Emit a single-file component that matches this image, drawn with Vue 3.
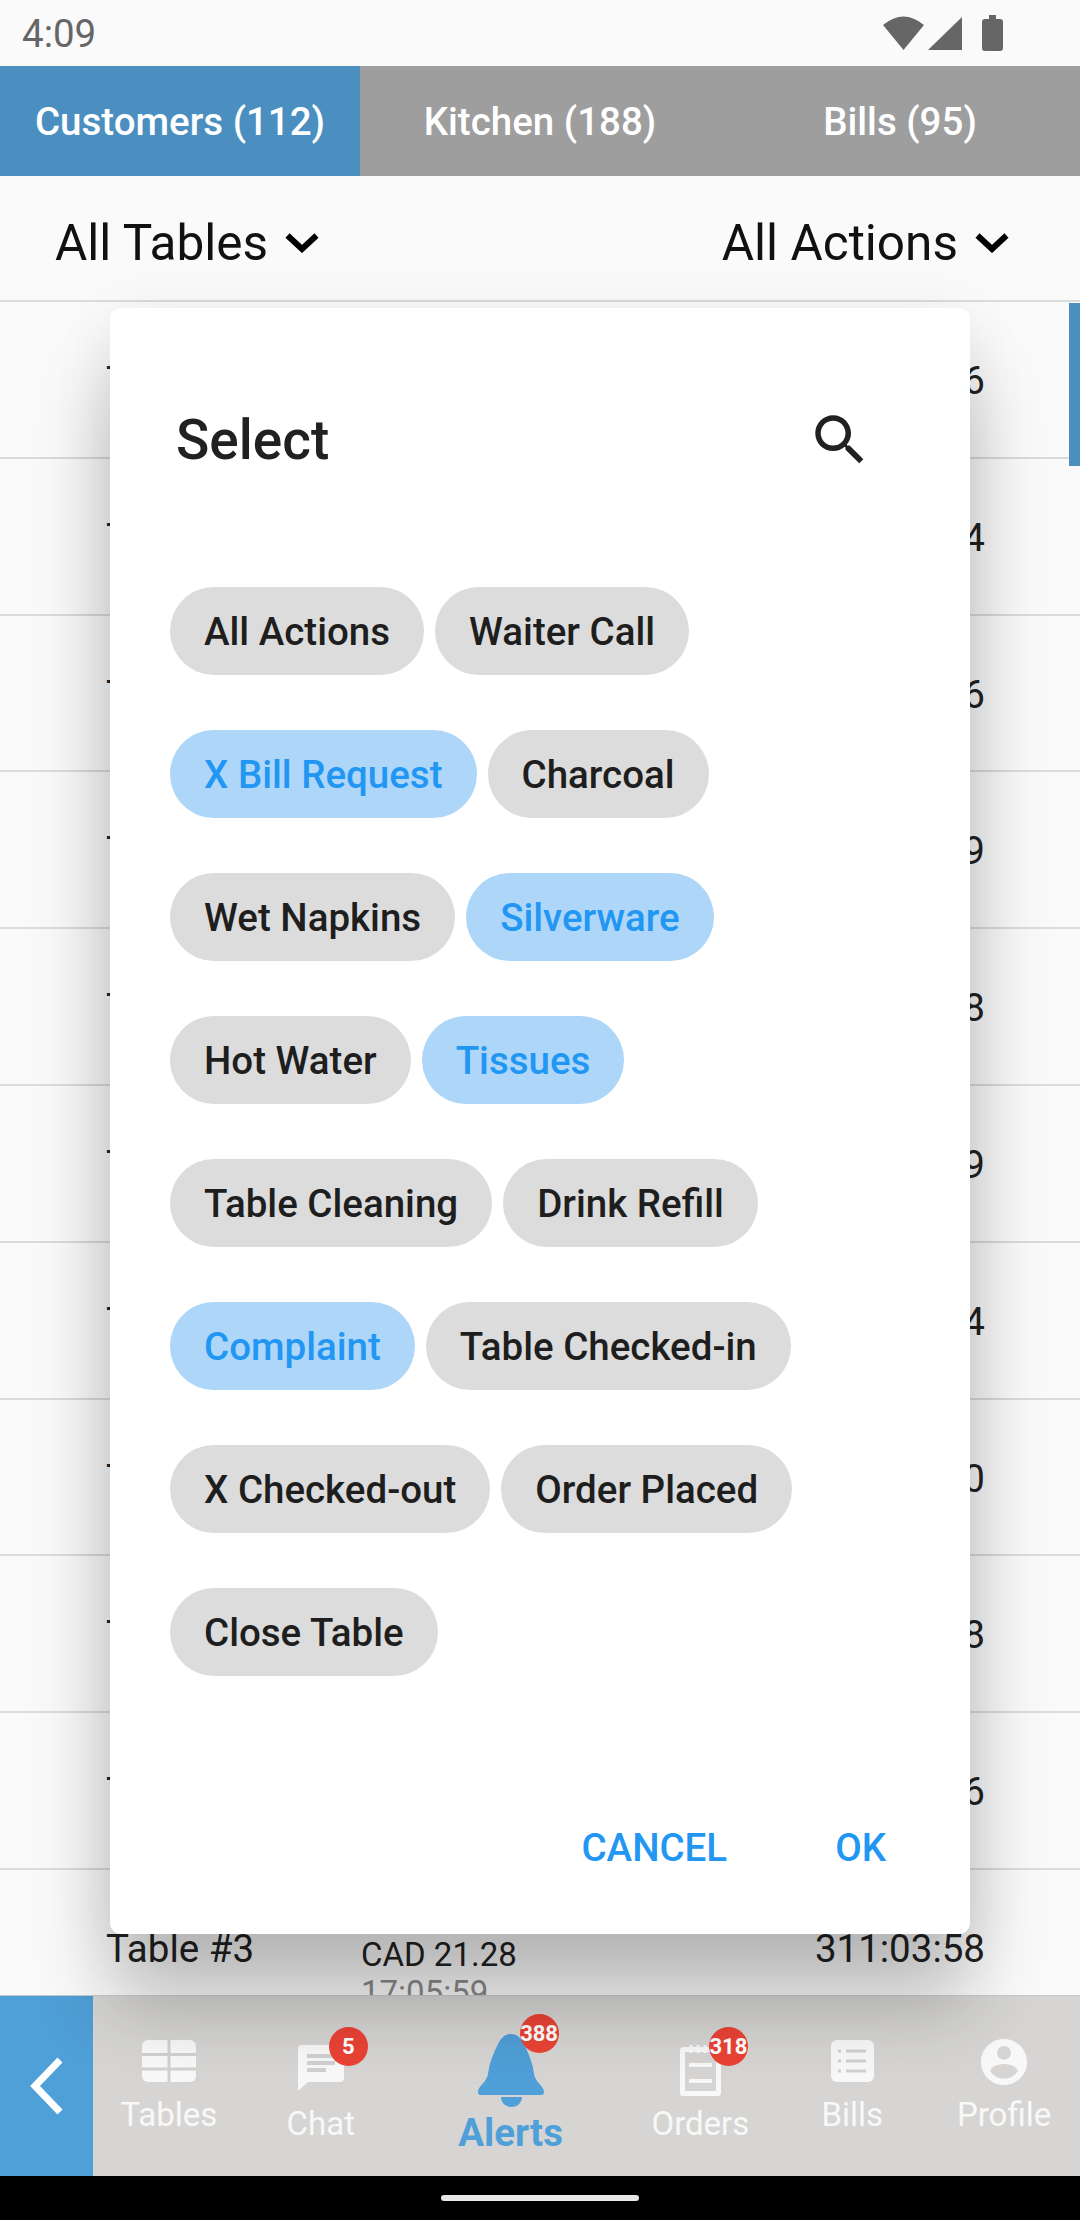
<template>
  <div class="page">
    <div class="status">
      <span class="clock">4:09</span>
      <div class="status-icons">
        <svg width="41" height="34" viewBox="0 0 41 34"><path d="M0 9 Q20.5 -8 41 9 L20.5 34 Z" fill="#666" /></svg>
        <svg width="34" height="33" viewBox="0 0 34 33"><path d="M34 0 V33 H0 Z" fill="#666" /></svg>
        <svg class="battery" width="21" height="36" viewBox="0 0 21 36"><path d="M7 0 H14 V4 H18 Q21 4 21 7 V33 Q21 36 18 36 H3 Q0 36 0 33 V7 Q0 4 3 4 H7 Z" fill="#666" /></svg>
      </div>
    </div>

    <div class="tabs">
      <div v-for="(t, i) in tabs" :key="t" class="tab" :class="{ active: i === 0 }">{{ t }}</div>
    </div>

    <div class="filters">
      <div v-for="f in filters" :key="f" class="filter">
        <span>{{ f }}</span>
        <svg width="34" height="20" viewBox="0 0 34 20"><path d="M2.5 2.5 L17 16 L31.500 2.500" fill="none" stroke="#000" stroke-width="6" /></svg>
      </div>
    </div>

    <div class="list">
      <div class="scrollbar"></div>
      <div v-for="r in rows" :key="r.time" class="row">
        <div class="row-table">{{ r.table }}</div>
        <div class="row-bill">
          <div class="amount">{{ r.amount }}</div>
          <div class="placed">{{ r.placed }}</div>
        </div>
        <div class="row-time">{{ r.time }}</div>
      </div>
    </div>

    <div class="bottom">
      <div class="back">
        <svg width="36" height="58" viewBox="0 0 36 58"><path d="M31 3 L6 29 L31 55" fill="none" stroke="#fff" stroke-width="7" /></svg>
      </div>

      <div class="nav-item nav-tables">
        <svg width="54" height="42" viewBox="0 0 54 42">
          <rect width="54" height="42" rx="6" fill="#f8f8f8" />
          <path d="M27 0 V42 M0 14.500 H54 M0 29 H54" stroke="#d2d1d0" stroke-width="3" />
        </svg>
        <span class="nav-label">Tables</span>
      </div>

      <div class="nav-item nav-chat">
        <div class="icon-wrap">
          <svg width="46" height="46" viewBox="0 0 46 46">
            <path d="M4 0 H42 Q46 0 46 4 V33 Q46 37 42 37 H10 L0 46 V4 Q0 0 4 0 Z" fill="#f8f8f8" />
            <path d="M9 11 H37 M9 18 H37 M9 25 H28" stroke="#d2d1d0" stroke-width="4" />
          </svg>
          <span class="badge badge-chat">5</span>
        </div>
        <span class="nav-label">Chat</span>
      </div>

      <div class="nav-item nav-alerts">
        <div class="icon-wrap">
          <svg width="66" height="73" viewBox="0 0 66 73">
            <path d="M33 0 C39 0 43 4 46 10 C51 20 55 30 56 40 C57 48 66 52 66 58 Q66 61 63 61 H3 Q0 61 0 58 C0 52 9 48 10 40 C11 30 15 20 20 10 C23 4 27 0 33 0 Z" fill="#4f9fd8" />
            <path d="M23 63 H44 C44 69 39 73 33.500 73 C28 73 23 69 23 63 Z" fill="#4f9fd8" />
          </svg>
          <span class="badge badge-alerts">388</span>
        </div>
        <span class="nav-label alerts-label">Alerts</span>
      </div>

      <div class="nav-item nav-orders">
        <div class="icon-wrap">
          <svg width="41" height="51" viewBox="0 0 41 51">
            <rect x="2.500" y="4.500" width="36" height="44" rx="1" fill="none" stroke="#f8f8f8" stroke-width="5" />
            <path d="M11 0 V8 M18 0 V8 M25 0 V8" stroke="#f8f8f8" stroke-width="3" />
            <path d="M9 20 H32 M9 36 H32" stroke="#f8f8f8" stroke-width="4" />
          </svg>
          <span class="badge badge-orders">318</span>
        </div>
        <span class="nav-label">Orders</span>
      </div>

      <div class="nav-item nav-bills">
        <svg width="43" height="42" viewBox="0 0 43 42">
          <rect width="43" height="42" rx="6" fill="#f8f8f8" />
          <path d="M15 11 H35 M15 21 H35 M15 31 H35" stroke="#d2d1d0" stroke-width="3" />
          <path d="M7 11 H10 M7 21 H10 M7 31 H10" stroke="#d2d1d0" stroke-width="3" />
        </svg>
        <span class="nav-label">Bills</span>
      </div>

      <div class="nav-item nav-profile">
        <svg width="46" height="46" viewBox="2 2 20 20">
          <path d="M12 2C6.480 2 2 6.480 2 12s4.480 10 10 10 10-4.480 10-10S17.520 2 12 2zm0 3c1.660 0 3 1.340 3 3s-1.340 3-3 3-3-1.340-3-3 1.340-3 3-3zm0 14.200c-2.500 0-4.710-1.280-6-3.220.030-1.990 4-3.080 6-3.080 1.990 0 5.970 1.090 6 3.080-1.290 1.940-3.500 3.220-6 3.220z" fill="#f8f8f8" />
        </svg>
        <span class="nav-label">Profile</span>
      </div>
    </div>

    <div class="system-nav"><div class="pill"></div></div>

    <div class="dialog">
      <div class="dialog-head">
        <span class="dialog-title">Select</span>
        <svg width="66" height="66" viewBox="0 0 24 24">
          <path d="M15.500 14h-.79l-.28-.27C15.410 12.590 16 11.110 16 9.500 16 5.910 13.090 3 9.500 3S3 5.910 3 9.500 5.910 16 9.500 16c1.610 0 3.090-.59 4.230-1.570l.27.28v.79l5 4.990L20.490 19l-4.990-5zm-6 0C7.010 14 5 11.990 5 9.500S7.010 5 9.500 5 14 7.010 14 9.500 11.990 14 9.500 14z" fill="#212121" />
        </svg>
      </div>
      <div class="chips">
        <div v-for="c in chips" :key="c.label" class="chip" :class="{ selected: c.selected }">{{ c.label }}</div>
      </div>
      <div class="actions">
        <span>CANCEL</span>
        <span>OK</span>
      </div>
    </div>
  </div>
</template>

<script setup>
const tabs = ['Customers (112)', 'Kitchen (188)', 'Bills (95)']
const filters = ['All Tables', 'All Actions']

const endings = ['311:04:06', '311:04:04', '311:03:56', '311:03:59', '311:03:48', '311:03:39', '311:03:34', '311:03:30', '311:03:28', '311:03:26']
const rows = [
  ...endings.map((time, i) => ({
    table: 'Table #' + (i + 4),
    amount: 'CAD 18.40',
    placed: '17:05:59',
    time
  })),
  { table: 'Table #3', amount: 'CAD 21.28', placed: '17:05:59', time: '311:03:58' }
]

const chips = [
  { label: 'All Actions' },
  { label: 'Waiter Call' },
  { label: 'X Bill Request', selected: true },
  { label: 'Charcoal' },
  { label: 'Wet Napkins' },
  { label: 'Silverware', selected: true },
  { label: 'Hot Water' },
  { label: 'Tissues', selected: true },
  { label: 'Table Cleaning' },
  { label: 'Drink Refill' },
  { label: 'Complaint', selected: true },
  { label: 'Table Checked-in' },
  { label: 'X Checked-out' },
  { label: 'Order Placed' },
  { label: 'Close Table' }
]
</script>

<style>
html, body {
  margin: 0;
  background: #fafafa;
}
</style>

<style scoped>
.page {
  position: relative;
  width: 1080px;
  height: 2220px;
  display: flex;
  flex-direction: column;
  overflow: hidden;
  font-family: Roboto, "Liberation Sans", sans-serif;
  background: #fafafa;
}
.status {
  height: 66px;
  flex: none;
  display: flex;
  align-items: center;
  justify-content: space-between;
  padding: 0 77px 0 22px;
  box-sizing: border-box;
}
.clock {
  font-size: 38.500px;
  color: #666;
}
.status-icons {
  display: flex;
  align-items: center;
  gap: 4px;
}
.battery {
  margin-left: 16px;
}
.tabs {
  height: 110px;
  flex: none;
  display: flex;
}
.tab {
  flex: 1;
  display: flex;
  align-items: center;
  justify-content: center;
  background: #9e9e9e;
  color: #fff;
  font-size: 38.500px;
  font-weight: 500;
}
.tab.active {
  background: #4a8fc0;
}
.filters {
  height: 126px;
  flex: none;
  box-sizing: border-box;
  display: flex;
  justify-content: space-between;
  align-items: center;
  padding: 10px 71px 0 55px;
  border-bottom: 2px solid #dadada;
  font-size: 49.500px;
  color: #111;
}
.filter {
  display: flex;
  align-items: center;
  gap: 17px;
}
.list {
  position: relative;
  flex: 1;
  min-height: 0;
  overflow: hidden;
  background: #fafafa;
}
.scrollbar {
  position: absolute;
  top: 1px;
  right: 0;
  width: 11px;
  height: 163px;
  background: #4a8fc0;
}
.row {
  height: 156.800px;
  box-sizing: border-box;
  display: flex;
  padding: 56px 95px 0 106px;
  border-bottom: 2px solid #dadada;
}
.row-table {
  width: 255px;
  font-size: 38.500px;
  line-height: 46px;
  color: #222;
}
.row-bill {
  flex: 1;
  padding-top: 10px;
}
.amount {
  font-size: 33px;
  line-height: 38px;
  color: #222;
}
.placed {
  font-size: 33px;
  line-height: 38px;
  color: #8a8a8a;
}
.row-time {
  font-size: 38.500px;
  line-height: 46px;
  color: #222;
}
.bottom {
  height: 181px;
  flex: none;
  display: flex;
  background: #d6d5d4;
  border-top: 1px solid #c8c8c8;
  box-sizing: border-box;
}
.back {
  width: 93px;
  flex: none;
  display: flex;
  align-items: center;
  justify-content: center;
  background: #4f9fd8;
}
.nav-item {
  flex: 2;
  display: flex;
  flex-direction: column;
  align-items: center;
  box-sizing: border-box;
}
.nav-tables, .nav-bills {
  padding-top: 44px;
}
.nav-chat, .nav-orders {
  padding-top: 49px;
}
.nav-alerts {
  flex: 3;
  padding-top: 38px;
}
.nav-profile {
  padding-top: 43px;
}
.nav-item svg {
  display: block;
}
.nav-label {
  margin-top: 13px;
  font-size: 33px;
  line-height: 40px;
  color: #f8f8f8;
}
.nav-orders .nav-label {
  margin-top: 8px;
}
.nav-profile .nav-label {
  margin-top: 10px;
}
.nav-item .alerts-label {
  margin-top: 3px;
  font-size: 38.500px;
  line-height: 46px;
  font-weight: 700;
  color: #4f9fd8;
}
.icon-wrap {
  position: relative;
}
.badge {
  position: absolute;
  width: 39px;
  height: 39px;
  border-radius: 50%;
  display: flex;
  align-items: center;
  justify-content: center;
  background: #ea4335;
  color: #fff;
  font-size: 22px;
  font-weight: 700;
}
.badge-chat {
  top: -18px;
  left: 31px;
}
.badge-alerts {
  top: -20px;
  left: 42px;
}
.badge-orders {
  top: -18px;
  left: 29px;
}
.system-nav {
  height: 44px;
  flex: none;
  display: flex;
  align-items: center;
  justify-content: center;
  background: #000;
}
.pill {
  width: 198px;
  height: 6px;
  border-radius: 3px;
  background: #e8e8e8;
}
.dialog {
  position: absolute;
  top: 308px;
  left: 110px;
  width: 860px;
  height: 1626px;
  box-sizing: border-box;
  display: flex;
  flex-direction: column;
  background: #fff;
  border-radius: 11px;
  box-shadow: 0 70px 80px rgba(0, 0, 0, 0.24), 0 10px 60px rgba(0, 0, 0, 0.08);
}
.dialog-head {
  display: flex;
  align-items: center;
  justify-content: space-between;
  height: 66px;
  margin-top: 99px;
  padding: 0 97px 0 66px;
}
.dialog-title {
  font-size: 55px;
  font-weight: 500;
  color: #212121;
}
.chips {
  display: flex;
  flex-wrap: wrap;
  gap: 55px 11px;
  width: 740px;
  margin: 114px 0 0 60px;
}
.chip {
  height: 88px;
  padding: 0 34px;
  border-radius: 44px;
  display: flex;
  align-items: center;
  background: #dcdcdc;
  color: #1e1e1e;
  font-size: 38.500px;
  font-weight: 500;
}
.chip.selected {
  background: #aed6f8;
  color: #2196f3;
}
.actions {
  display: flex;
  justify-content: flex-end;
  gap: 108px;
  padding-right: 84px;
  margin-top: 149px;
  color: #2196f3;
  font-size: 38.500px;
  font-weight: 500;
  line-height: 46px;
}
</style>
